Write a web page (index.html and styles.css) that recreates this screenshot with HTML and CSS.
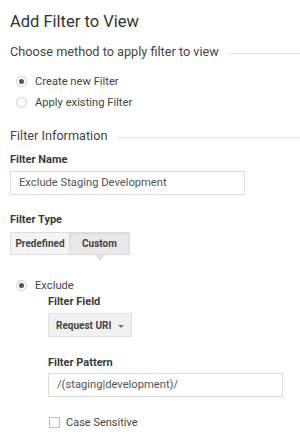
FILE: index.html
```html
<!DOCTYPE html>
<html lang="en">
<head>
  <meta charset="UTF-8">
  <title>Add Filter to View</title>
  <link rel="stylesheet" href="styles.css">
</head>
<body>
  <div class="page">
    <h1 class="title">Add Filter to View</h1>

    <div class="section-head first">
      <span>Choose method to apply filter to view</span>
      <span class="rule"></span>
    </div>
    <div class="radio-list">
      <label class="radio-row"><span class="radio checked"></span>Create new Filter</label>
      <label class="radio-row"><span class="radio"></span>Apply existing Filter</label>
    </div>

    <div class="section-head second">
      <span>Filter Information</span>
      <span class="rule"></span>
    </div>

    <div class="field-label name-label">Filter Name</div>
    <div class="text-input wide">Exclude Staging Development</div>

    <div class="field-label type-label">Filter Type</div>
    <div class="toggle">
      <button class="toggle-btn">Predefined</button>
      <button class="toggle-btn active">Custom</button>
    </div>

    <label class="radio-row exclude-row"><span class="radio checked"></span>Exclude</label>
    <div class="sub">
      <div class="field-label field-label-tight">Filter Field</div>
      <div class="select">
        <span>Request URI</span>
        <span class="caret"></span>
      </div>

      <div class="field-label pattern-label">Filter Pattern</div>
      <div class="text-input pattern">/(staging|development)/</div>

      <label class="check-row"><span class="checkbox"></span>Case Sensitive</label>
    </div>
  </div>
</body>
</html>
```

FILE: styles.css
```css
body {
  margin: 0;
  padding: 0;
  font-family: Roboto, "Liberation Sans", sans-serif;
  color: #444;
  background: #fff;
}
.page {
  padding: 0 10px;
}
.title {
  margin: 11px 0 0;
  font-size: 16.5px;
  line-height: 21px;
  font-weight: 400;
  color: #333;
}
.section-head {
  display: flex;
  align-items: center;
  font-size: 12.7px;
  line-height: 18px;
  color: #444;
  margin-right: -10px;
}
.section-head.first {
  margin-top: 11px;
}
.section-head.second {
  margin-top: 14px;
}
.rule {
  flex: 1;
  height: 1px;
  background: #e4e4e4;
  margin-left: 10px;
  margin-top: 3px;
}
.radio-list {
  margin-top: 10px;
  padding-left: 6px;
}
.radio-row {
  display: flex;
  align-items: center;
  height: 21px;
  font-size: 11.2px;
  color: #444;
}
.radio {
  width: 9px;
  height: 9px;
  border: 1px solid #cdcdcd;
  border-radius: 50%;
  margin-right: 8px;
  display: flex;
  align-items: center;
  justify-content: center;
}
.radio.checked::after {
  content: "";
  width: 5px;
  height: 5px;
  border-radius: 50%;
  background: #555;
}
.field-label {
  font-size: 11px;
  line-height: 16px;
  font-weight: 700;
  color: #3a3a3a;
}
.name-label {
  margin-top: 7px;
}
.type-label {
  margin-top: 17px;
}
.text-input {
  box-sizing: border-box;
  height: 24px;
  border: 1px solid #dcdcdc;
  font-size: 11.2px;
  line-height: 22px;
  padding: 0 8px;
  color: #555;
}
.text-input.wide {
  width: 235px;
  margin-top: 3px;
}
.toggle {
  display: flex;
  margin-top: 4px;
}
.toggle-btn {
  position: relative;
  box-sizing: border-box;
  width: 60px;
  height: 23px;
  font-family: inherit;
  font-size: 10px;
  font-weight: 700;
  color: #444;
  background: #f4f4f4;
  border: 1px solid #dedede;
  padding: 0;
  margin: 0;
}
.toggle-btn + .toggle-btn {
  border-left: none;
}
.toggle-btn.active {
  background: #e9e9e9;
  box-shadow: inset 0 1px 2px rgba(0,0,0,0.08);
}
.toggle-btn.active::after {
  content: "";
  position: absolute;
  left: 50%;
  bottom: -7px;
  margin-left: -5px;
  border-left: 5px solid transparent;
  border-right: 5px solid transparent;
  border-top: 6px solid #e2e2e2;
}
.exclude-row {
  height: 18px;
  margin-top: 21px;
  padding-left: 6px;
}
.sub {
  padding-left: 38px;
}
.field-label-tight {
  margin-top: 0;
}
.select {
  box-sizing: border-box;
  width: 84px;
  height: 24px;
  margin-top: 3px;
  display: flex;
  align-items: center;
  justify-content: space-between;
  padding: 0 7px 0 7px;
  font-size: 10px;
  font-weight: 700;
  white-space: nowrap;
  color: #444;
  background: #f1f1f1;
  border: 1px solid #e0e0e0;
}
.caret {
  width: 0;
  height: 0;
  margin-top: 2px;
  border-left: 3px solid transparent;
  border-right: 3px solid transparent;
  border-top: 3px solid #777;
}
.pattern-label {
  margin-top: 18px;
}
.text-input.pattern {
  width: 235px;
  margin-top: 2px;
}
.check-row {
  display: flex;
  align-items: center;
  height: 18px;
  margin-top: 16px;
  font-size: 11px;
  color: #444;
}
.checkbox {
  box-sizing: border-box;
  width: 11px;
  height: 11px;
  border: 1px solid #bdbdbd;
  margin: 0 6px 0 1px;
}
```
